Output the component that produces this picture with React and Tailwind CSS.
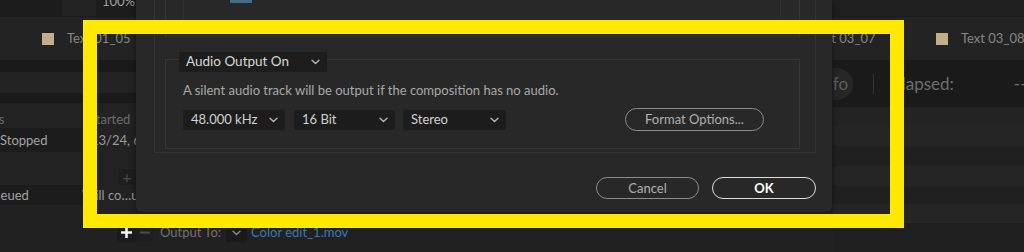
import React from "react";

const Chevron = ({ className = "" }) => (
  <svg width="9" height="6" viewBox="0 0 9 6" className={className} fill="none">
    <path d="M1 1.2 L4.5 4.6 L8 1.2" stroke="currentColor" strokeWidth="1.4" strokeLinecap="round" strokeLinejoin="round" />
  </svg>
);

const Select = ({ label, w }) => (
  <div className={`h-[20px] ${w} bg-[#1c1c1c] rounded-[2px] flex items-center pl-[8px] pr-[7px] text-[#d2d2d2] text-[13px]`}>
    <span className="flex-1 leading-none">{label}</span>
    <Chevron className="text-[#b4b4b4]" />
  </div>
);

const Pill = ({ children, w, strong }) => (
  <div
    className={`${w} h-[22px] rounded-full border-[1.5px] flex items-center justify-center text-[13px] leading-none ${
      strong ? "border-[#dedede] text-white font-bold" : "border-[#8c8c8c] text-[#b0b0b0]"
    }`}
  >
    {children}
  </div>
);

const items = ["Text 01_05", "Text 01_06", "Text 02_01", "Text 02_02", "Text 03_05", "Text 03_07", "Text 03_08"];

export default function App() {
  return (
    <div className="relative w-[1024px] h-[252px] overflow-hidden bg-[#222222] font-['Lato','Liberation_Sans',sans-serif]">
      {/* background app */}
      <div className="flex flex-col h-full">
        {/* top strip */}
        <div className="h-[17px] flex border-b border-[#1b1b1b] shrink-0">
          <div className="w-[62px] bg-[#1c1c1c]" />
          <div className="w-[34px] bg-[#222222]" />
          <div className="w-[40px] bg-[#1c1c1c] overflow-hidden pl-[6px]">
            <div className="text-[13px] leading-[13px] text-[#a0a0a0] -mt-[5px]">100%</div>
          </div>
          <div className="flex-1 bg-[#1f1f1f]" />
        </div>
        {/* items row */}
        <div className="h-[43px] flex items-center pl-[42px] bg-[#232323] shrink-0">
          {items.map((t) => (
            <div key={t} className="w-[149px] shrink-0 flex items-center">
              <div className="w-[12px] h-[12px] bg-[#c4ad8a]" />
              <span className="ml-[13px] text-[13px] text-[#868686] leading-none">{t}</span>
            </div>
          ))}
        </div>
        {/* middle region */}
        <div className="h-[152px] flex shrink-0">
          {/* left column */}
          <div className="w-[136px] shrink-0 flex flex-col overflow-hidden text-[13px] leading-none">
            <div className="h-[12px] bg-[#1a1a1a]" />
            <div className="h-[21px] bg-[#232323]" />
            <div className="h-[10px] bg-[#1a1a1a]" />
            <div className="h-[25px] flex items-end pb-[2px] text-[#6c6c6c] bg-[#222222]">
              <span className="-ml-[31px] w-[114px] shrink-0">Status</span>
              <span className="ml-[6px] shrink-0">Started</span>
            </div>
            <div className="h-[24px] flex items-center bg-[#222222]">
              <div className="w-[83px] shrink-0 h-full bg-[#1c1c1c] flex items-center text-[#a3a3a3]">Stopped</div>
              <span className="ml-[8px] shrink-0 text-[#9a9a9a] whitespace-nowrap">13/24, 6:14 PM</span>
            </div>
            <div className="h-[33px] flex items-end justify-end bg-[#222222]">
              <div className="w-[18px] h-[16px] bg-[#1e1e1e] flex items-center justify-center text-[#4a4a4a] text-[16px]">+</div>
            </div>
            <div className="h-[20px] flex items-center bg-[#222222]">
              <div className="w-[83px] shrink-0 h-full bg-[#1c1c1c] flex items-center text-[#a3a3a3] overflow-hidden">
                <span className="-ml-[17px] shrink-0">Queued</span>
              </div>
              <span className="-ml-[1px] shrink-0 text-[#9a9a9a] whitespace-nowrap">Will co…ue</span>
            </div>
            <div className="flex-1 bg-[#222222]" />
          </div>
          <div className="flex-1 bg-[#212121]" />
          {/* right column */}
          <div className="w-[191px] shrink-0 flex flex-col overflow-hidden">
            <div className="h-[47px] bg-[#1a1a1a] flex items-center text-[17px] text-[#5e5e5e] leading-none whitespace-nowrap">
              <div className="-ml-[19px] w-[39px] shrink-0 h-[32px] rounded-full bg-[#262626] flex items-center justify-center">Info</div>
              <div className="ml-[20px] shrink-0 w-[1px] h-[20px] bg-[#353535]" />
              <span className="ml-[18px] shrink-0 text-[#6e6e6e]">Elapsed:</span>
              <span className="ml-[60px] shrink-0 text-[#6e6e6e]">--:--</span>
            </div>
            <div className="h-[19px] bg-[#232323]" />
            <div className="h-[20px] bg-[#252525]" />
            <div className="h-[20px] bg-[#202020]" />
            <div className="h-[20px] bg-[#252525]" />
            <div className="h-[18px] bg-[#202020]" />
            <div className="flex-1 bg-[#252525]" />
          </div>
        </div>
        {/* bottom row */}
        <div className="flex-1 flex bg-[#212121]">
          <div className="flex-1 flex items-center pl-[117px] pt-[1px] text-[13px] leading-none">
            <div className="w-[19px] h-[18px] bg-[#1b1b1b] flex items-center justify-center">
              <svg width="13" height="13" viewBox="0 0 13 13">
                <path d="M6.5 1 V12 M1 6.5 H12" stroke="#f2f2f2" strokeWidth="2.6" />
              </svg>
            </div>
            <div className="w-[17px] h-[18px] bg-[#1e1e1e] flex items-center justify-center">
              <svg width="10" height="3" viewBox="0 0 10 3">
                <path d="M0 1.5 H10" stroke="#4c4c4c" strokeWidth="2" />
              </svg>
            </div>
            <span className="ml-[7px] text-[#707070]">Output To:</span>
            <div className="ml-[5px] w-[21px] h-[18px] bg-[#1a1a1a] flex items-center justify-center">
              <Chevron className="text-[#8a8a8a]" />
            </div>
            <span className="ml-[4px] text-[#3b78b8]">Color edit_1.mov</span>
          </div>
          <div className="w-[191px] flex flex-col">
            <div className="h-[11px] bg-[#252525]" />
            <div className="flex-1 bg-[#1f1f1f]" />
          </div>
        </div>
      </div>

      {/* dialog */}
      <div className="absolute left-[136px] top-0 w-[696px] h-[212px] bg-[#282828] rounded-b-[6px] flex flex-col shadow-[0_0_6px_rgba(0,0,0,0.5)]">
        <div className="ml-[18px] w-[662px] h-[153px] border-x border-b border-[#333333] pl-[10px] flex flex-col">
          {/* previous (video) section */}
          <div className="w-[635px] h-[37px] border-x border-b border-[#363636] pl-[17px]">
            <div className="w-[598px] h-[26px] border-x border-b border-[#313131] pl-[46px]">
              <div className="w-[22px] h-[3px] bg-[#3f6f8a]" />
            </div>
          </div>
          {/* audio section */}
          <div className="mt-[22px] w-[635px] h-[90px] border border-[#363636] flex flex-col">
            <div className="-mt-[8px] ml-[13px] w-[148px] h-[20px] bg-[#1d1d1d] rounded-[2px] flex items-center pl-[7px] pr-[7px] text-[#d8d8d8] text-[13.5px]">
              <span className="flex-1 leading-none">Audio Output On</span>
              <Chevron className="text-[#b4b4b4]" />
            </div>
            <div className="mt-[10px] ml-[17px] text-[13px] leading-[16px] text-[#a9a9a9]">
              A silent audio track will be output if the composition has no audio.
            </div>
            <div className="mt-[10px] ml-[17px] mr-[35px] flex items-center">
              <Select label="48.000 kHz" w="w-[102px]" />
              <div className="w-[9px]" />
              <Select label="16 Bit" w="w-[101px]" />
              <div className="w-[8px]" />
              <Select label="Stereo" w="w-[103px]" />
              <div className="ml-auto">
                <Pill w="w-[139px] h-[23px]">Format Options...</Pill>
              </div>
            </div>
          </div>
        </div>
        <div className="mt-[24px] flex justify-end gap-[13px] pr-[16px]">
          <Pill w="w-[103px]">Cancel</Pill>
          <Pill w="w-[104px]" strong>
            OK
          </Pill>
        </div>
      </div>

      {/* yellow highlight */}
      <div className="absolute left-[83px] top-[20px] w-[821px] h-[208px] border-[14px] border-[#ffe900]" />
    </div>
  );
}
